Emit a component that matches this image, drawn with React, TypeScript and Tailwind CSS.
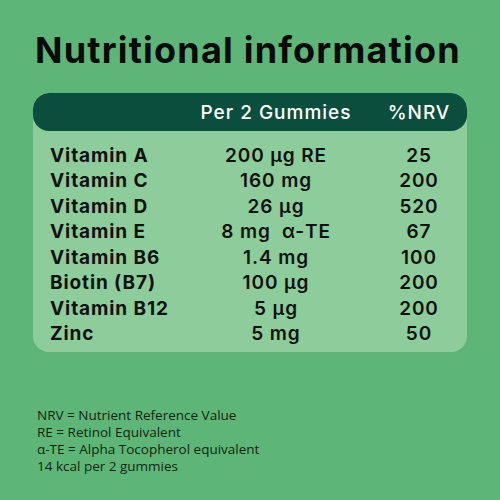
const rows = [
  ["Vitamin A", "200 µg RE", "25"],
  ["Vitamin C", "160 mg", "200"],
  ["Vitamin D", "26 µg", "520"],
  ["Vitamin E", "8 mg  α-TE", "67"],
  ["Vitamin B6", "1.4 mg", "100"],
  ["Biotin (B7)", "100 µg", "200"],
  ["Vitamin B12", "5 µg", "200"],
  ["Zinc", "5 mg", "50"],
];

export default function App() {
  return (
    <div className="w-[500px] h-[500px] bg-[#5db677] overflow-hidden font-['Inter',sans-serif]">
      <h1 className="pt-[29px] pl-[35px] text-[36px] leading-[42px] font-bold text-[#0a0a0a] tracking-[1.2px] whitespace-nowrap">
        Nutritional information
      </h1>
      <div className="mx-[33px] mt-[22px] w-[434px] rounded-[16px] bg-[#8ccd9b] overflow-hidden">
        <div className="flex h-[38px] items-center pt-[2px] bg-[#0a4f3d] rounded-[16px] text-white text-[19px] font-medium tracking-[1px]">
          <div className="w-[160px]" />
          <div className="w-[166px] text-center whitespace-nowrap">Per 2 Gummies</div>
          <div className="flex-1 pl-[12px] text-center">%NRV</div>
        </div>
        <div className="pt-[12px] pb-[5px] text-[19px] font-semibold tracking-[0.9px] text-[#111]">
          {rows.map(([name, amount, nrv]) => (
            <div key={name} className="flex h-[25.5px] items-center">
              <div className="w-[160px] pl-[17px] font-bold whitespace-nowrap">{name}</div>
              <div className="w-[166px] text-center whitespace-pre">{amount}</div>
              <div className="flex-1 pl-[12px] text-center">{nrv}</div>
            </div>
          ))}
        </div>
      </div>
      <div className="mt-[55px] pl-[37px] text-[13.5px] leading-[17px] text-[#142414] font-['Open_Sans',sans-serif]">
        <p>NRV = Nutrient Reference Value</p>
        <p>RE = Retinol Equivalent</p>
        <p>α-TE = Alpha Tocopherol equivalent</p>
        <p>14 kcal per 2 gummies</p>
      </div>
    </div>
  );
}
